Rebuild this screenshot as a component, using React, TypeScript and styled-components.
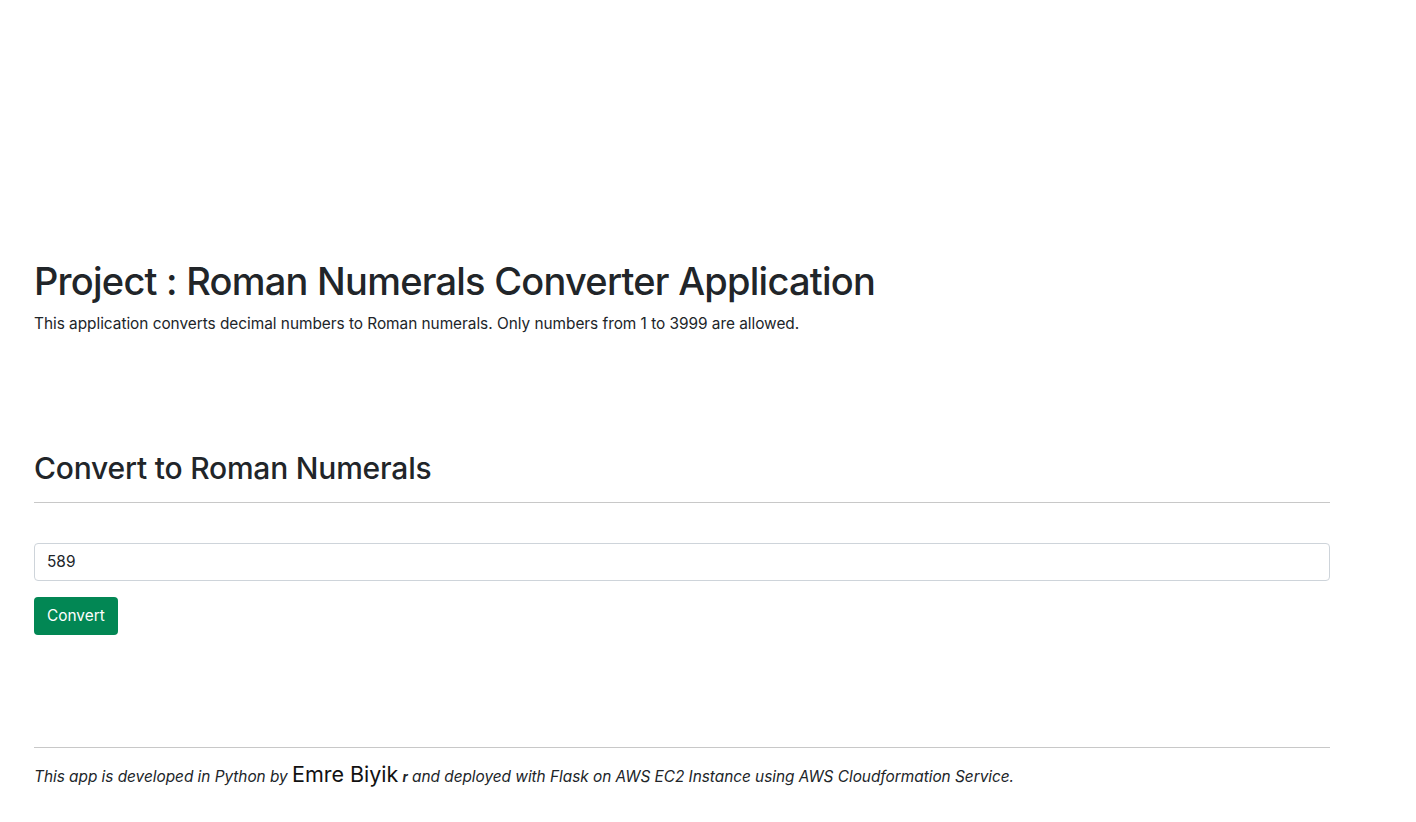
import styled, { createGlobalStyle } from "styled-components";

const GlobalStyle = createGlobalStyle`
    * {
        box-sizing: border-box;
    }
    body {
        margin: 0;
        background-color: #fff;
        color: #212529;
        font-family: Inter, "Liberation Sans", sans-serif;
        font-size: 15.4px;
        line-height: 1.5;
    }
`;

const Page = styled.div`
    width: 1296px;
    margin-left: 34px;
    padding-top: 259px;
`;

const Header = styled.header`
    margin-bottom: 115px;
`;

const Title = styled.h1`
    margin: 0 0 7px;
    font-size: 38px;
    font-weight: 500;
    line-height: 1.2;
    letter-spacing: -0.76px;
`;

const Lead = styled.p`
    margin: 0;
    letter-spacing: -0.03px;
`;

const SectionTitle = styled.h2`
    margin: 0 0 16px;
    font-size: 30px;
    font-weight: 500;
    line-height: 1.2;
    letter-spacing: -0.2px;
`;

const Rule = styled.hr<{ $gap: number }>`
    margin: 0 0 ${(p) => p.$gap}px;
    border: 0;
    border-top: 1px solid #c8c8c8;
`;

const Form = styled.form`
    display: flex;
    flex-direction: column;
    align-items: flex-start;
    gap: 16px;
    margin-bottom: 112px;
`;

const NumberInput = styled.input`
    width: 100%;
    height: 38px;
    padding: 6px 12px;
    border: 1px solid #ced4da;
    border-radius: 4px;
    font-family: inherit;
    font-size: 15.4px;
    color: #212529;
    outline: none;
`;

const SubmitButton = styled.button`
    height: 38px;
    padding: 6px 13px;
    border: 0;
    border-radius: 4px;
    background-color: #028754;
    color: #fff;
    font-family: inherit;
    font-size: 15.4px;
    cursor: pointer;
`;

const Footer = styled.footer`
    font-style: italic;
    letter-spacing: -0.03px;
`;

const Author = styled.span`
    font-style: normal;
    font-size: 21.5px;
    color: #111;
`;

const Trail = styled.b`
    font-size: 13px;
`;

export default function App() {
    return (
        <>
            <GlobalStyle />
            <Page>
                <Header>
                    <Title>Project : Roman Numerals Converter Application</Title>
                    <Lead>
                        This application converts decimal numbers to Roman numerals. Only numbers from 1 to 3999 are allowed.
                    </Lead>
                </Header>
                <SectionTitle>Convert to Roman Numerals</SectionTitle>
                <Rule $gap={40} />
                <Form onSubmit={(e) => e.preventDefault()}>
                    <NumberInput type="text" defaultValue="589" />
                    <SubmitButton type="submit">Convert</SubmitButton>
                </Form>
                <Rule $gap={10} />
                <Footer>
                    This app is developed in Python by <Author>Emre Biyik</Author> <Trail>r</Trail> and deployed with Flask on AWS EC2 Instance using AWS Cloudformation Service.
                </Footer>
            </Page>
        </>
    );
}
